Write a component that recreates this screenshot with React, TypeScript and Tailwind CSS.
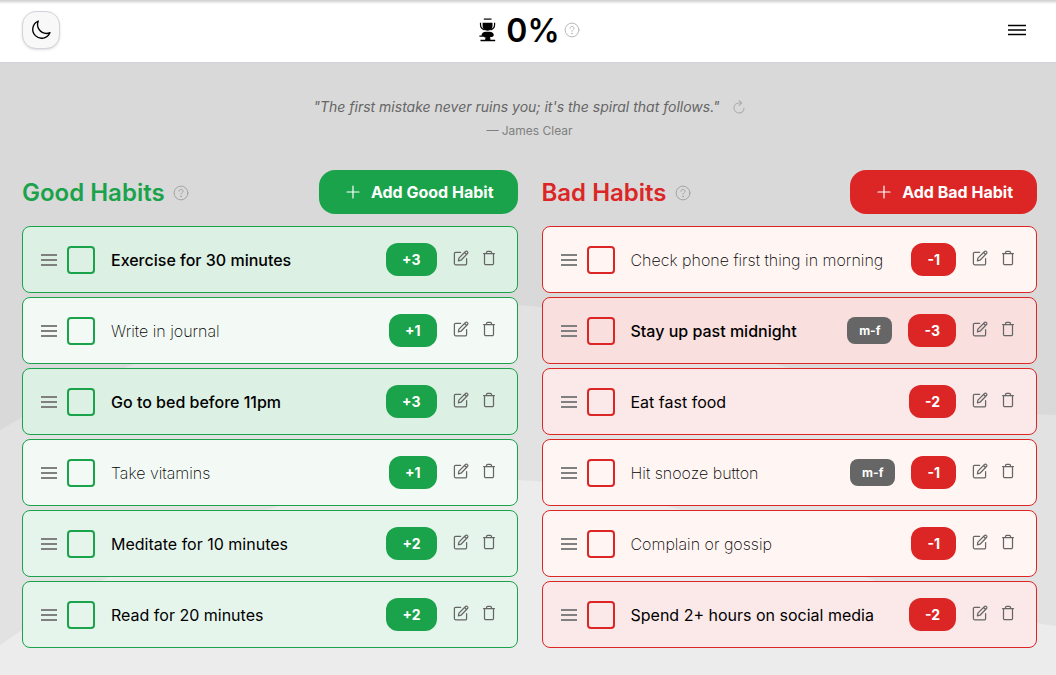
import { useState } from "react";

type Tone = "good" | "bad";
type Habit = { name: string; points: number; tag?: string };

const goodHabits: Habit[] = [
  { name: "Exercise for 30 minutes", points: 3 },
  { name: "Write in journal", points: 1 },
  { name: "Go to bed before 11pm", points: 3 },
  { name: "Take vitamins", points: 1 },
  { name: "Meditate for 10 minutes", points: 2 },
  { name: "Read for 20 minutes", points: 2 },
];

const badHabits: Habit[] = [
  { name: "Check phone first thing in morning", points: -1 },
  { name: "Stay up past midnight", points: -3, tag: "m-f" },
  { name: "Eat fast food", points: -2 },
  { name: "Hit snooze button", points: -1, tag: "m-f" },
  { name: "Complain or gossip", points: -1 },
  { name: "Spend 2+ hours on social media", points: -2 },
];

const shades: Record<Tone, string[]> = {
  good: ["bg-[#f3faf6]", "bg-[#e6f5ec]", "bg-[#dcf0e3]"],
  bad: ["bg-[#fff5f3]", "bg-[#fbe8e8]", "bg-[#fadfdf]"],
};
const weights = ["font-extralight", "font-normal", "font-medium"];
const tones = {
  good: { text: "text-[#1aa34a]", fill: "bg-[#1aa34a]", border: "border-[#1aa34a]" },
  bad: { text: "text-[#dc2626]", fill: "bg-[#dc2626]", border: "border-[#dc2626]" },
};

function HelpIcon() {
  return (
    <svg className="size-4" viewBox="0 0 16 16" fill="none" stroke="currentColor" strokeLinecap="round">
      <circle cx="8" cy="8" r="6.9" />
      <path d="M6 6.3c0-1.2.9-1.9 2-1.9s2 .7 2 1.8c0 1.5-2 1.5-2 3" />
      <circle cx="8" cy="11.4" r=".35" fill="currentColor" />
    </svg>
  );
}

function EditIcon() {
  return (
    <svg className="size-4" viewBox="0 0 16 16" fill="none" stroke="currentColor" strokeWidth="1.25" strokeLinejoin="round" strokeLinecap="round">
      <path d="M7.6 2.4H2.6a1.2 1.2 0 0 0-1.2 1.2v10a1.2 1.2 0 0 0 1.2 1.2h9.8a1.2 1.2 0 0 0 1.2-1.2V8.6" />
      <path d="M5.4 10.9l.5-2.8 6.6-6.6a1.3 1.3 0 0 1 1.9 0l.1.1a1.3 1.3 0 0 1 0 1.9L8 10.2zM11.6 2.5l1.9 1.9" />
    </svg>
  );
}

function TrashIcon() {
  return (
    <svg className="h-4 w-3" viewBox="0 0 12 16" fill="none" stroke="currentColor" strokeWidth="1.25" strokeLinecap="round">
      <path d="M.6 3.5h10.8M1.5 3.8v9.6a1.3 1.3 0 0 0 1.3 1.3h6.4a1.3 1.3 0 0 0 1.3-1.3V3.8M3.5 3.4V2.6a1.2 1.2 0 0 1 1.2-1.2h2.6a1.2 1.2 0 0 1 1.2 1.2v.8" />
    </svg>
  );
}

function TrophyIcon() {
  return (
    <svg className="mr-2.5 h-6 w-[17px]" viewBox="0 0 17 24" fill="black">
      <path d="M4.8.5h7.7v1.2H4.8z" />
      <path d="M3.6 4.7h9.9v3.4c0 2.900-1.900 4.600-4.950 4.600S3.600 11 3.600 8.100z" />
      <path d="M1.500 4.700v1.800c0 2.700 1.600 4.600 4 5.500M15.600 4.700v1.800c0 2.700-1.600 4.600-4 5.500" fill="none" stroke="black" strokeWidth="1.200" />
      <path d="M6.800 13.700h3.800c2.500.3 4.100 1.400 4.200 3.100.1 1.100-.8 1.900-2.300 2.200l-1.500.3.500 2.400h4.700v1.500H1.500v-1.500h4.600l.4-2.200c-.8 0-1.400-.3-1.900-.7H.4v-1.200h2.400l-.2-.8c.1-1.700 1.700-2.800 4.200-3.100z" />
    </svg>
  );
}

function HabitRow({ habit, tone }: { habit: Habit; tone: Tone }) {
  const [done, setDone] = useState(false);
  const level = Math.abs(habit.points) - 1;
  const t = tones[tone];
  return (
    <li className={`flex h-[67px] items-center rounded-lg border pr-[22px] pl-[18px] ${t.border} ${shades[tone][level]}`}>
      <button aria-label={`Move ${habit.name}`} className="shrink-0 text-[#808080]">
        <svg className="h-3 w-4" viewBox="0 0 16 12" stroke="currentColor" strokeWidth="2">
          <path d="M0 1h16M0 6h16M0 11h16" />
        </svg>
      </button>
      <label className="ml-2.5 flex min-w-0 flex-1 items-center gap-4">
        <input
          type="checkbox"
          checked={done}
          onChange={() => setDone(!done)}
          className={`size-7 shrink-0 appearance-none rounded border-2 ${t.border}`}
        />
        <span className={`truncate text-base text-black ${weights[level]}`}>{habit.name}</span>
      </label>
      {habit.tag && (
        <span className="mr-4 rounded-lg bg-[#666666] px-3 text-xs leading-[27px] font-bold text-white">{habit.tag}</span>
      )}
      <span className={`mr-4 rounded-xl px-4 text-sm leading-[33px] font-bold text-white ${t.fill}`}>
        {habit.points > 0 ? `+${habit.points}` : habit.points}
      </span>
      <div className="mb-1 flex gap-3.5 text-[#666666]">
        <button aria-label={`Edit ${habit.name}`}><EditIcon /></button>
        <button aria-label={`Delete ${habit.name}`}><TrashIcon /></button>
      </div>
    </li>
  );
}

function HabitColumn({ title, add, tone, habits }: { title: string; add: string; tone: Tone; habits: Habit[] }) {
  const t = tones[tone];
  return (
    <section className="min-w-0">
      <div className="mb-3 flex items-center justify-between">
        <div className="flex items-center gap-2 pt-0.5">
          <h2 className={`text-2xl leading-8 font-semibold ${t.text}`}>{title}</h2>
          <button aria-label={`About ${title}`} className="text-[#a3a3a3]"><HelpIcon /></button>
        </div>
        <button className={`flex h-11 items-center gap-2 rounded-2xl px-6 text-base font-bold text-white ${t.fill}`}>
          <svg className="size-5" viewBox="0 0 20 20" fill="none" stroke="currentColor" strokeWidth="1.2" strokeLinecap="round">
            <path d="M10 4v12M4 10h12" />
          </svg>
          {add}
        </button>
      </div>
      <ul className="flex flex-col gap-1">
        {habits.map((h) => <HabitRow key={h.name} habit={h} tone={tone} />)}
      </ul>
    </section>
  );
}

export default function App() {
  return (
    <div className="relative isolate min-h-screen bg-[#d9d9d9] font-['Inter',sans-serif]">
      <svg aria-hidden="true" className="absolute inset-0 -z-10 h-full w-full" viewBox="0 0 1056 675" preserveAspectRatio="none">
        <path d="M0 430C150 342 320 290 518 305C700 320 840 410 1056 415V675H0z" fill="#e2e2e2" />
        <path d="M0 645C150 540 310 470 518 480C720 490 850 600 1056 626V675H0z" fill="#ececec" />
      </svg>
      <header className="grid h-[63px] grid-cols-3 items-center border-b border-[#d1d5db] bg-white bg-linear-to-b from-[#cccccc] to-white to-[4px] pr-[19px] pb-0.5 pl-[22px]">
        <button aria-label="Dark mode" className="flex size-[38px] items-center justify-center rounded-[14px] border border-[#d1d5db] bg-[#f8f8f8] shadow-sm">
          <svg className="size-[22px]" viewBox="0 0 24 24" fill="none" stroke="black" strokeWidth="1.5" strokeLinejoin="round">
            <path d="M21.75 15a9.72 9.72 0 0 1-3.75.75A9.75 9.75 0 0 1 9 2.25 9.75 9.75 0 1 0 21.75 15z" />
          </svg>
        </button>
        <div className="flex items-center justify-center">
          <TrophyIcon />
          <h1 className="pt-0.5 text-[32px] leading-10 font-semibold text-black">0%</h1>
          <button aria-label="About your score" className="ml-1 text-[#b8b8b8]"><HelpIcon /></button>
        </div>
        <button aria-label="Menu" className="mr-2.5 justify-self-end">
          <svg className="h-3 w-5" viewBox="0 0 20 12" stroke="black" strokeWidth="1.7">
            <path d="M1 1.5h18M1 6h18M1 10.5h18" />
          </svg>
        </button>
      </header>
      <main className="pr-[19px] pb-6 pl-[22px]">
        <div className="flex flex-col items-center pt-8">
          <div className="flex items-center gap-3">
            <p className="text-sm leading-6 text-[#666666] italic">"The first mistake never ruins you; it's the spiral that follows."</p>
            <button aria-label="New quote" className="text-[#b0b0b0]">
              <svg className="size-3.5" viewBox="0 0 14 14" fill="none" stroke="currentColor" strokeWidth="1.2" strokeLinecap="round" strokeLinejoin="round">
                <path d="M9.5 3H6.5A5 5 0 1 0 12 8M7.2.6L9.6 3 7.2 5.4" />
              </svg>
            </button>
          </div>
          <p className="text-xs leading-6 text-[#808080]">— James Clear</p>
        </div>
        <div className="mt-[27px] grid grid-cols-2 gap-6">
          <HabitColumn title="Good Habits" add="Add Good Habit" tone="good" habits={goodHabits} />
          <HabitColumn title="Bad Habits" add="Add Bad Habit" tone="bad" habits={badHabits} />
        </div>
      </main>
    </div>
  );
}
